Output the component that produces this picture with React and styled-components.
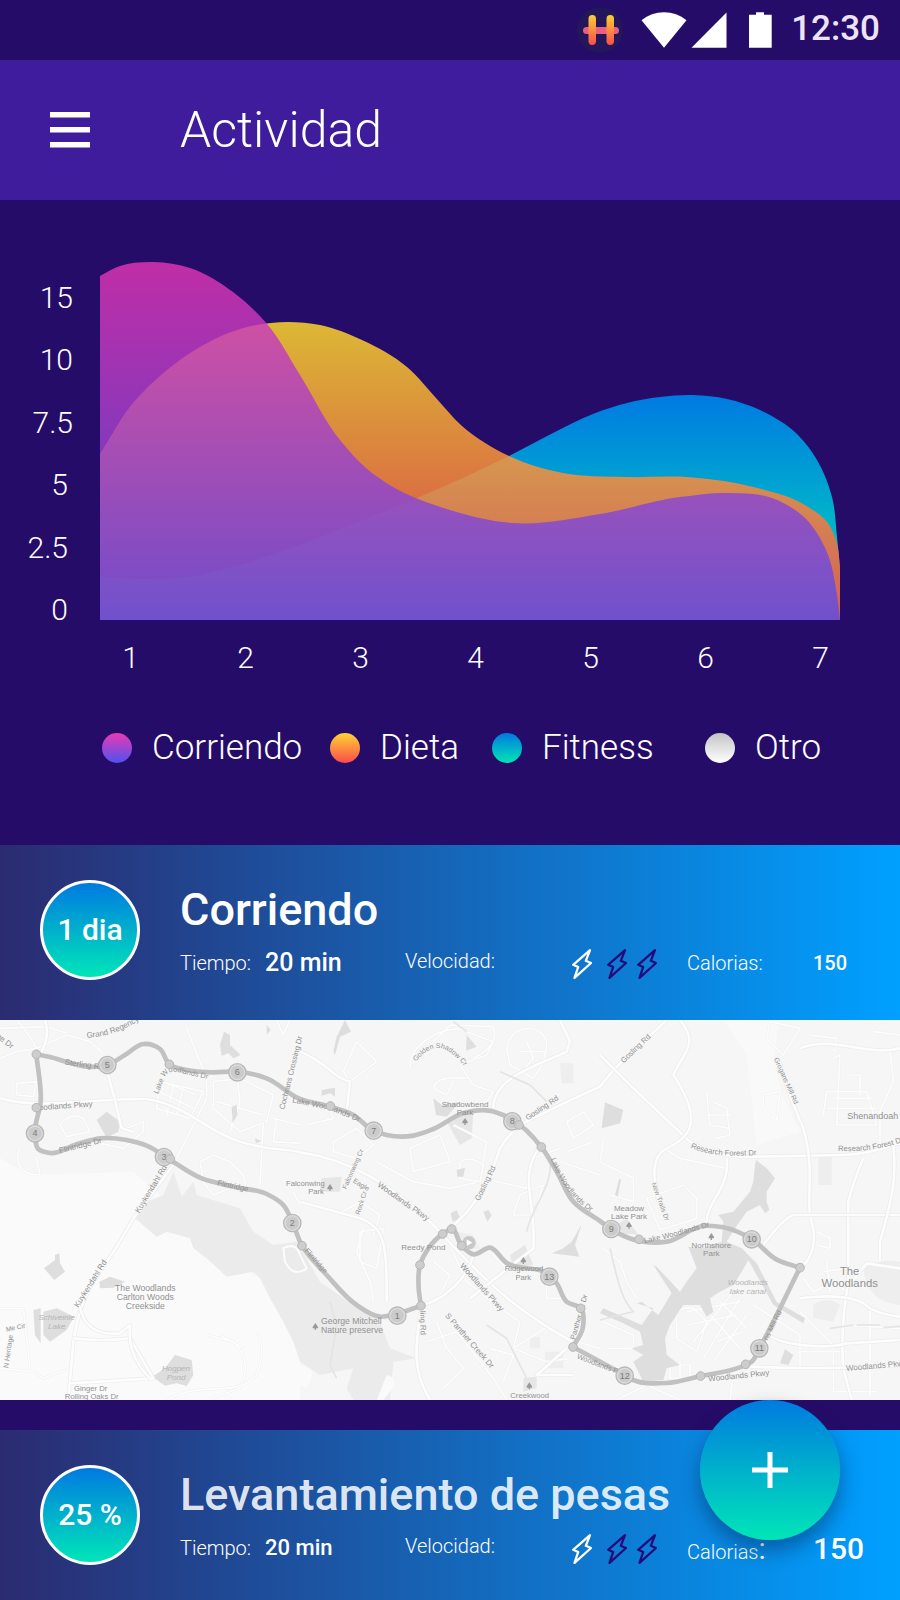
import React from "react";
import styled, { createGlobalStyle } from "styled-components";

const GlobalStyle = createGlobalStyle`
  *, *::before, *::after { box-sizing: border-box; }
  body {
    margin: 0;
    background: #260c69;
    color: #fff;
    font-family: Roboto, "Liberation Sans", sans-serif;
  }
  h1, h2, dl, dt, dd, ul { margin: 0; padding: 0; }
`;

/* ---------- helpers ---------- */

const dist = (a, b) => Math.hypot(b[0] - a[0], b[1] - a[1]) || 1;

/* unit-speed tangent at a point, weighted by the distance to each neighbour */
const tangent = (prev, p, next) => {
  if (!prev || !next) {
    const [a, b] = prev ? [prev, p] : [p, next];
    const d = dist(a, b);
    return [(b[0] - a[0]) / d, (b[1] - a[1]) / d];
  }
  const a = dist(prev, p);
  const b = dist(p, next);
  return [0, 1].map((k) => (((p[k] - prev[k]) / a) * b + ((next[k] - p[k]) / b) * a) / (a + b));
};

const smooth = (pts) => {
  let d = `M${pts[0][0]} ${pts[0][1]}`;
  for (let i = 0; i < pts.length - 1; i++) {
    const p = pts[i];
    const q = pts[i + 1];
    const len = dist(p, q) / 3;
    const t1 = tangent(pts[i - 1], p, q);
    const t2 = tangent(p, q, pts[i + 2]);
    const c1 = [p[0] + t1[0] * len, p[1] + t1[1] * len];
    const c2 = [q[0] - t2[0] * len, q[1] - t2[1] * len];
    d += `C${c1[0].toFixed(1)} ${c1[1].toFixed(1)} ${c2[0].toFixed(1)} ${c2[1].toFixed(1)} ${q[0]} ${q[1]}`;
  }
  return d;
};

/* ---------- layout ---------- */

const Screen = styled.main`
  display: flex;
  flex-direction: column;
`;

const StatusBar = styled.div`
  display: flex;
  align-items: center;
  justify-content: flex-end;
  gap: 18px;
  height: 60px;
  padding-right: 20px;
`;

const SignalGroup = styled.div`
  display: flex;
  gap: 4px;
`;

const Clock = styled.time`
  height: 60px;
  font-size: 35px;
  font-weight: 500;
  line-height: 57px;
  color: #ece4f6;
`;

const Toolbar = styled.header`
  display: flex;
  align-items: center;
  gap: 90px;
  height: 140px;
  padding: 0 50px;
  background: #3f1c9c;
`;

const MenuButton = styled.button`
  display: flex;
  padding: 0;
  border: 0;
  background: none;
  color: inherit;
  cursor: pointer;
`;

const PageTitle = styled.h1`
  font-size: 50px;
  font-weight: 300;
  line-height: 62px;
`;

/* ---------- chart ---------- */

const ChartSection = styled.section`
  padding: 62px 0 76px;
`;

const Plot = styled.div`
  display: grid;
  grid-template-columns: 100px 1fr;
  padding-right: 60px;
`;

const YAxis = styled.ul`
  display: flex;
  flex-direction: column;
  justify-content: space-between;
  height: 363px;
  padding-top: 21px;
`;

const YTick = styled.li`
  list-style: none;
  padding-right: ${(p) => (p.$low ? 32 : 27)}px;
  font-size: 30px;
  font-weight: 300;
  line-height: 30px;
  text-align: right;
`;

const Areas = styled.svg`
  display: block;
  width: 100%;
  height: 358px;
`;

const XAxis = styled.ul`
  display: grid;
  grid-template-columns: repeat(7, 1fr);
  padding: 18px 22px 0 73px;
`;

const XTick = styled.li`
  list-style: none;
  font-size: 30px;
  font-weight: 300;
  line-height: 30px;
  text-align: center;
`;

const Legend = styled.ul`
  display: grid;
  grid-template-columns: 228fr 162fr 213fr 135fr;
  padding: 54px 60px 0 102px;
`;

const LegendItem = styled.li`
  display: flex;
  align-items: center;
  gap: 20px;
  list-style: none;
  font-size: 35px;
  font-weight: 300;
  line-height: 42px;
`;

const Dot = styled.span`
  flex: none;
  width: 30px;
  height: 30px;
  border-radius: 50%;
  background: linear-gradient(${(p) => p.$from}, ${(p) => p.$to});
`;

/* ---------- activity cards ---------- */

const Card = styled.article`
  display: flex;
  gap: 40px;
  min-height: ${(p) => (p.$last ? 170 : 175)}px;
  padding: 35px 0 0 40px;
  background: linear-gradient(to right, #2b2b70, #00a0ff);
`;

const Badge = styled.div`
  display: flex;
  flex: none;
  align-items: center;
  justify-content: center;
  width: 100px;
  height: 100px;
  border: 3px solid #fff;
  border-radius: 50%;
  background: linear-gradient(#007ae0, #00e6b8);
  font-size: 30px;
  font-weight: 500;
  line-height: 30px;
`;

const CardBody = styled.div`
  flex: 1;
  padding-top: 4px;
`;

const CardTitle = styled.h2`
  margin-bottom: 13px;
  font-size: 45px;
  font-weight: 500;
  line-height: 52px;
  color: ${(p) => (p.$muted ? "rgba(255,255,255,.87)" : "#fff")};
`;

const Stats = styled.dl`
  display: grid;
  grid-template-columns: 225fr 282fr 213fr;
  align-items: start;
`;

const Stat = styled.div`
  display: flex;
  align-items: ${(p) => p.$align || "center"};
`;

const StatName = styled.dt`
  flex: none;
  width: ${(p) => p.$width}px;
  font-size: 20px;
  font-weight: 300;
  line-height: ${(p) => p.$line || 28}px;
`;

const StatValue = styled.dd`
  display: flex;
  font-size: ${(p) => p.$size}px;
  font-weight: 500;
  line-height: ${(p) => (p.$size === 30 ? 30 : 28)}px;
`;

const BigColon = styled.span`
  font-size: 30px;
  font-weight: 400;
  line-height: 28px;
`;

const Bolts = styled.span`
  display: flex;
  gap: 10px;

  svg:first-child { margin-right: 5px; }
`;

const MapFrame = styled.svg`
  display: block;
  width: 100%;
  height: 380px;
  margin-bottom: 30px;
  background: #f6f6f6;
`;

const AddButton = styled.button`
  position: fixed;
  right: 60px;
  bottom: 60px;
  display: flex;
  align-items: center;
  justify-content: center;
  width: 140px;
  height: 140px;
  padding: 0;
  border: 0;
  border-radius: 50%;
  background: linear-gradient(#007ae0, #00e6b8);
  box-shadow: 0 10px 20px rgba(0, 20, 60, .4);
  cursor: pointer;
`;

/* ---------- icons ---------- */

const LogoIcon = () => (
  <svg width="46" height="48" viewBox="0 0 46 48" aria-hidden="true">
    <defs>
      <linearGradient id="bar" x1="0" y1="0" x2="0" y2="1">
        <stop offset="0" stopColor="#fdcf35" />
        <stop offset="1" stopColor="#fd4c4c" />
      </linearGradient>
    </defs>
    <circle cx="23" cy="24" r="23" fill="#23165b" />
    <rect x="6" y="21" width="36" height="7" rx="3.5" fill="#e9607f" />
    <rect x="11.500" y="9" width="7.500" height="30" rx="3.700" fill="url(#bar)" />
    <rect x="29.500" y="9" width="7.500" height="30" rx="3.700" fill="url(#bar)" />
  </svg>
);

const WifiIcon = () => (
  <svg width="46" height="36" viewBox="0 0 46 36" aria-hidden="true">
    <path d="M.5 8.300C7 3 14.500.3 23 .3S39 3 45.500 8.300L23 35.700Z" fill="#fff" />
  </svg>
);

const CellIcon = () => (
  <svg width="36" height="36" viewBox="0 0 36 36" aria-hidden="true">
    <path d="M.500 35.700H35.500V.500Z" fill="#fff" />
  </svg>
);

const BatteryIcon = () => (
  <svg width="28" height="36" viewBox="0 0 28 36" aria-hidden="true">
    <path d="M4 2.700h7V.300h8v2.400h7.700v33H4Z" fill="#fff" />
  </svg>
);

const MenuIcon = () => (
  <svg width="40" height="36" viewBox="0 0 40 36" aria-hidden="true">
    <path d="M0 0h40v5.500H0zM0 15h40v5.500H0zM0 30h40v5.500H0z" fill="#fff" />
  </svg>
);

const PlusIcon = () => (
  <svg width="36" height="36" viewBox="0 0 36 36" aria-hidden="true">
    <path d="M15.500 0h5v15.500H36v5H20.500V36h-5V20.500H0v-5h15.500z" fill="#fff" />
  </svg>
);

const Bolt = ({ color }) => (
  <svg width="20" height="30" viewBox="0 0 20 30" aria-hidden="true">
    <path
      d="M18 1.200 1.200 15.800 6.200 18 2.500 28.800 19 14 13.800 11.800Z"
      fill="none"
      stroke={color}
      strokeWidth="2.300"
      strokeLinejoin="round"
    />
  </svg>
);

/* ---------- chart data ---------- */

const FITNESS = [
  [0, 315], [43, 317], [87, 315], [133, 305], [183, 289], [233, 270], [317, 236],
  [409, 194], [453, 171], [493, 152], [527, 141], [560, 135], [593, 133],
  [627, 137], [660, 148], [697, 172], [717, 198], [732, 235], [737, 275],
  [740, 310], [740, 358],
];
const DIET = [
  [0, 192], [33, 141], [67, 108], [100, 85], [140, 67], [188, 60], [220, 63],
  [262, 78], [307, 105], [336, 136], [362, 164], [409, 194], [463, 211],
  [525, 215], [587, 215], [653, 225], [705, 243], [727, 260], [736, 278],
  [740, 305], [740, 358],
];
const RUNNING = [
  [0, 14], [20, 4], [50, 0], [90, 6], [133, 30], [167, 62], [200, 113],
  [240, 178], [266, 206], [293, 225], [350, 248], [412, 261], [500, 252],
  [580, 235], [630, 231], [672, 236], [706, 257], [726, 288], [737, 333],
  [740, 358],
];
const area = (pts) => `${smooth(pts)}L740 358L0 358Z`;

const SERIES = [
  { name: "Corriendo", from: "#ea3ab4", to: "#4f51f0" },
  { name: "Dieta", from: "#fdd435", to: "#ff4a4a" },
  { name: "Fitness", from: "#0078e2", to: "#00e6b4" },
  { name: "Otro", from: "#c4c4c4", to: "#ffffff" },
];

/* ---------- map ---------- */

const ROUTES = [
  [[109, 118], [150, 126], [205, 142], [260, 155], [322, 150], [375, 120], [430, 87], [480, 102], [508, 148], [560, 165], [640, 172], [712, 170], [800, 190], [900, 252], [991, 275], [1060, 300], [1120, 347], [1160, 360], [1240, 362], [1300, 342], [1390, 295], [1460, 286], [1537, 314], [1624, 396], [1670, 470], [1720, 560], [1800, 618], [1850, 652], [1917, 678], [2000, 680], [2110, 633], [2170, 637], [2255, 672], [2330, 734], [2400, 758]],
  [[2400, 758], [2278, 1000], [2255, 1040], [2237, 1050], [2102, 1083], [2000, 1104], [1900, 1095], [1873, 1080], [1719, 996]],
  [[1719, 996], [1748, 940], [1742, 880], [1700, 860], [1670, 805], [1648, 780], [1520, 744], [1470, 698], [1420, 718], [1385, 692], [1355, 642], [1328, 657], [1285, 700], [1260, 750], [1256, 820], [1263, 872]],
  [[1263, 872], [1192, 896], [1140, 905], [1070, 870], [980, 780], [906, 692], [877, 622], [850, 570], [800, 537], [700, 515], [600, 488], [511, 435], [440, 392], [380, 375], [300, 370], [230, 388], [150, 414], [115, 402], [105, 355], [122, 260], [109, 118]],
];

const STOPS = [
  [1192, 902, "1"], [877, 624, "2"], [492, 426, "3"], [105, 355, "4"], [322, 150, "5"],
  [712, 172, "6"], [1121, 347, "7"], [1537, 319, "8"], [1834, 642, "9"], [2255, 673, "10"],
  [2278, 1000, "11"], [1874, 1082, "12"], [1648, 785, "13"],
];

const NODES = [
  [109, 118], [109, 278], [508, 148], [511, 432], [991, 273], [1557, 330], [1624, 396],
  [1917, 673], [2400, 758], [2237, 1048], [2102, 1083], [1719, 996], [1742, 880],
  [1385, 692], [1355, 642], [1328, 657], [1260, 750], [1263, 872], [906, 692],
];

/* x, y, text, rotation, size, lighter italic water name */
const LABELS = [
  [10, 84, "ge Dr", 38, 24], [248, 156, "Sterling Ri", 8, 24],
  [198, 280, "oodlands Pkwy", -4, 24], [243, 399, "Flintridge Dr", -14, 24],
  [880, 175, "Cochrans Crossing Dr", -76, 23],
  [460, 526, "Kuykendahl Rd", -59, 24], [697, 520, "Flintridge", 12, 23],
  [278, 810, "Kuykendahl Rd", -58, 24], [436, 827, "The Woodlands", 0, 26],
  [436, 854, "Carlton Woods", 0, 26], [436, 882, "Creekside", 0, 26],
  [170, 916, "Schiveinle", 0, 24, 1], [170, 943, "Lake", 0, 24, 1],
  [32, 1010, "N Heritage", -82, 21], [48, 944, "Me Cir", -12, 20],
  [528, 1068, "Hogpen", 0, 24, 1], [528, 1094, "Pond", 0, 24, 1],
  [272, 1128, "Ginger Dr", 0, 23], [275, 1153, "Rolling Oaks Dr", 0, 23],
  [916, 513, "Falconwing", 0, 23], [948, 538, "Park", 0, 23],
  [1395, 276, "Shadowbend", 0, 24], [1395, 300, "Park", 0, 24],
  [1630, 285, "Gosling Rd", -34, 23], [1463, 508, "Gosling Rd", -64, 23],
  [1065, 465, "Falconwing Cr", -66, 20], [1080, 515, "Eagle", 32, 21], [1090, 566, "Rock Cr", -72, 20],
  [1206, 566, "Woodlands Pkwy", 35, 24], [1270, 706, "Reedy Pond", 0, 24],
  [1440, 822, "Woodlands Pkwy", 48, 24], [1403, 982, "S Panther Creek Dr", 49, 24],
  [1261, 924, "ling Rd", 88, 23], [1054, 926, "George Mitchell", 0, 26], [1056, 955, "Nature preserve", 0, 26],
  [943, 742, "Flintridge", 48, 22], [1572, 768, "Ridgewood", 0, 23], [1570, 794, "Park", 0, 23],
  [1589, 1148, "Creekwood", 0, 23], [1744, 908, "Panther Ck Dr", -74, 22],
  [1808, 1060, "Woodlands Pkwy", 21, 22],
  [1912, 106, "Gosling Rd", -44, 23], [2352, 200, "Grogans Mill Rd", 66, 21],
  [2618, 311, "Shenandoah", 0, 27], [1975, 562, "New Trails Dr", 70, 20],
  [1887, 587, "Meadow", 0, 24], [1887, 612, "Lake Park", 0, 24],
  [2134, 698, "Northshore", 0, 24], [2134, 723, "Park", 0, 24],
  [2243, 811, "Woodlands", 0, 24, 1], [2243, 836, "lake canal", 0, 24, 1],
  [2549, 780, "The", 0, 34], [2549, 816, "Woodlands", 0, 34],
  [2324, 934, "ns Mill Rd", -64, 22], [2217, 1090, "Woodlands Pkwy", -6, 24],
  [2630, 1060, "Woodlands Pkwy", -5, 24],
];

const CURVED = [
  ["regency", "M260 68Q340 66 420 15", "Grand Regency", 24],
  ["golden", "M1248 140Q1300 76 1350 112T1400 180", "Golden Shadow Cr", 21],
  ["lakewest", "M474 238L496 182Q512 162 550 176L650 198", "Lake Woodlands Dr", 22],
  ["lakemid", "M876 262L990 285L1100 330", "Lake Woodlands Dr", 24],
  ["lakeeast", "M1652 432Q1700 560 1810 612", "Lake Woodlands Dr", 23],
  ["lakepark", "M1934 684Q2020 668 2150 628", "Lake Woodlands Dr", 23],
  ["forest", "M2072 398Q2150 432 2290 418", "Research Forest Dr", 23],
  ["forest2", "M2514 408Q2630 412 2720 376", "Research Forest Dr", 23],
];

const TREES = [[990, 518], [1395, 320], [946, 935], [1570, 737], [1588, 1113], [1887, 631], [2134, 665]];

const WIDE_ROADS = [
  "M0 250Q60 268 150 265C260 262 360 250 440 252C560 270 620 350 720 380S860 400 900 412C1040 430 1180 510 1300 630C1420 760 1520 870 1700 970L1730 990",
  "M400 610Q350 700 300 770Q240 850 220 980L205 1155",
  "M520 450L400 610", "M135 15Q150 60 125 110", "M320 165Q345 250 365 340L400 350",
  "M1350 640Q1450 560 1500 400Q1540 330 1620 300Q1720 250 1800 215L1840 165L2000 15",
  "M1265 870C1320 860 1400 800 1420 720", "M1265 870C1250 970 1230 1060 1290 1155",
  "M1800 120L1900 220L2070 380Q2150 430 2270 425L2520 420C2600 420 2640 400 2700 385",
  "M2340 140Q2350 200 2410 340C2450 480 2410 560 2440 640Q2450 720 2400 760",
  "M2590 430Q2560 500 2545 560L2545 800Q2520 940 2530 1060L2555 1155",
  "M2400 850Q2560 830 2610 880Q2650 900 2700 905", "M2290 690Q2350 610 2380 600H2700",
  "M2290 950C2350 1000 2500 1000 2540 985L2700 975", "M2250 1055Q2500 1065 2700 1050",
  "M2680 390C2690 480 2680 540 2640 680L2640 740", "M2400 100C2500 60 2600 125 2700 100",
  "M1680 15L1710 80L1700 110C1600 155 1480 190 1480 280",
  "M900 110C980 140 1000 190 1050 200L1040 290", "M2180 430C2190 520 2120 560 2120 620",
  "M2040 15C2100 90 2050 110 2020 180C2120 330 2060 370 2000 400S1970 520 1975 560",
  "M1700 1000L1610 1080H1720", "M1624 390C1550 480 1610 560 1600 700L1410 850",
  "M900 560L1080 610C1160 640 1160 700 1160 860", "M220 970Q300 980 390 970L460 1090L210 1105",
  "M240 875C250 940 300 960 360 955L390 930Q380 1020 450 1090", "M2700 760L2600 745L2540 820",
];

const THIN_ROADS = [
  "M0 130L50 110L110 100L200 60L270 80L310 115M0 40L140 35L200 55M50 15Q90 60 110 100",
  "M60 400C40 440 60 480 120 480L110 430M50 205L110 200L100 245L50 240Z",
  "M180 330Q210 290 250 310L270 350L200 365ZM380 340L430 320L430 350L370 400L300 385",
  "M480 200L610 230L570 310L470 280ZM500 205L590 240M480 230L580 280M470 255L560 300M520 210L500 300M550 220L530 300",
  "M640 200L720 190L820 240L800 320L720 350L640 280ZM650 260L790 300M710 180L720 260L690 350",
  "M820 310L900 330M830 310L820 380L900 385M790 320L780 510M600 440L640 420L690 440L730 480L740 530L690 520L640 540L610 500Z",
  "M530 430L620 250L620 170M560 40L620 190M830 15L850 60L870 15M0 880L70 880L90 1060",
  "M0 1060L100 1070L130 1090L210 1060M620 960L700 980Q760 1040 720 1120L620 1155M660 960L730 1000",
  "M500 1155C620 1090 700 1155 770 1080Q800 1000 770 950",
  "M880 530L900 570M850 700Q890 680 900 720L920 760Q880 790 855 740Z",
  "M1070 80L1130 140L1050 200L1030 170ZM920 330L1000 310L980 260M1000 380L1070 340L1120 390L1070 430L1000 410Z",
  "M1230 400L1320 360L1350 440L1240 470ZM1130 440L1240 500L1350 520L1440 500L1460 380L1360 330",
  "M1230 160C1220 80 1360 20 1400 50L1480 80L1460 120L1380 150L1420 210L1480 230L1460 260M1400 190Q1310 180 1300 220L1340 240L1360 200M1300 80L1350 30L1480 35Q1500 90 1420 130",
  "M1520 100C1530 30 1620 20 1640 80Q1640 140 1600 190L1530 150ZM1580 80L1600 130L1560 180M1560 110H1640",
  "M1380 440Q1410 420 1450 450L1440 500L1380 490ZM1450 490L1580 520L1600 430L1680 400M1560 540L1630 510L1600 600L1540 600Z",
  "M1080 650L1150 640L1130 760L1080 740ZM1010 600L1080 560L1140 600L1120 660M1090 640L1070 710L1110 800L1120 860",
  "M1300 740L1350 780L1310 860M1350 690L1400 800L1500 880L1560 920L1540 1000L1650 930M1310 920L1340 1000L1390 1060L1330 1120M1280 980L1370 950L1480 1090L1520 1155",
  "M1470 1000L1540 1020L1510 1100M1540 1000L1640 1040L1710 1030M1640 780V850L1700 850M1480 720L1530 770",
  "M1730 980L1800 1000M1700 320L1750 290L1780 330L1720 370ZM1700 410L1780 380M1680 440L1800 480",
  "M2120 230L2130 330L2190 340M2140 260L2180 280L2190 360L2150 370M2120 300H2190M2290 240L2340 230L2330 320L2290 280ZM2310 20L2400 40L2350 120L2300 70Z",
  "M2430 60L2510 70L2505 110M2500 130L2520 120L2510 330H2630L2600 230H2480L2470 300M2500 250H2620M2480 280H2630M2550 180H2580V240M2620 50L2700 60M2670 110L2680 200L2640 290V400",
  "M1810 380L1800 440L1900 490V560L1830 540M2050 510L2090 550V610L1980 645L1940 550ZM1810 700L1860 740L1880 800L1910 850M1990 400L2040 430L2180 460",
  "M2030 930Q2020 870 2080 880L2120 920L2090 1010L2030 970ZM2060 890L2220 860M2060 930L2210 900M2080 980L2200 830M2110 1030L2220 850M2140 1040L2240 900M2150 980L2230 950M2160 860L2240 940M2140 910L2220 1000",
  "M2010 1050H2070V1090H2010ZM2040 1040V1090M2200 1080L2190 1155M2260 870L2400 960V1050M2400 890L2500 990V1130H2630M2610 880V1140M2530 930L2700 940",
  "M2450 650L2490 670V700L2450 690M2410 790L2440 830L2500 800L2540 830M2470 770L2540 760M2480 740L2490 830M1810 920L1900 960V1000L1820 1000M1850 1155L1940 1110L2040 1155M2400 1010H2540",
];

const LAKES = [
  "M2268 435L2300 460L2325 490L2300 530V560L2308 585L2295 595L2280 570L2240 590L2205 640L2180 680L2225 700L2270 745L2330 860L2415 910L2410 925L2320 870L2245 735L2225 770L2200 810L2160 830L2130 850L2140 890L2120 905L2100 870L2050 870L2010 930L1995 970L2000 1020L2040 1050L2000 1060L1990 1095L1930 1100L1900 1040L1930 1020L1895 1000L1930 990L1920 950L1870 925L1800 895L1810 880L1925 930L1960 880L1910 865L1925 860L1975 900L2015 835L1960 750L1970 755L2040 830L2060 800L2090 760L2065 695L2110 700L2165 680L2170 620L2155 600L2200 590L2225 560L2250 530L2260 500L2265 450Z",
  "M660 90L672 50L690 60V90L722 120L700 130L685 115L665 122Z",
  "M290 315L320 290L360 320L355 350L320 368Z",
  "M132 760L165 735L165 720L178 715L180 745L195 770L163 795Z",
  "M100 885L122 880V985L105 960ZM130 890L170 880L222 905L200 945L150 980L130 960Z",
  "M457 1085L495 1060L525 1020L575 1035L580 1080L560 1113L530 1105L495 1112Z",
  "M1035 15L1053 50L1020 65L1005 120L1000 110L1010 65Z",
  "M1400 60L1430 95L1398 107Z", "M1300 250L1325 270L1380 260L1340 305L1308 300Z",
  "M1745 628L1725 690L1738 725L1655 715L1690 700L1715 680Z", "M1352 595L1370 585L1380 610L1358 620Z",
  "M965 225L1005 218V245L990 235L965 242Z", "M298 800L330 785L375 800L340 818L300 820Z",
  "M1450 590L1465 585L1475 600L1462 620Z", "M2340 1045L2355 1003L2380 1020L2365 1050Z",
  "M695 275L710 270L712 300L698 325Z", "M1370 465L1395 458L1390 485L1372 485Z",
  "M1815 262L1870 285L1860 325L1805 340Z", "M1845 540L1858 490L1863 495L1853 545Z",
  "M765 370L785 378L768 385Z", "M800 30L812 45L800 60Z",
];

const RouteMap = () => (
  <MapFrame viewBox="0 15 2700 1140" preserveAspectRatio="xMidYMid slice" role="img" aria-label="Mapa del recorrido" fontFamily="'Liberation Sans', sans-serif">
    <path d="M0 430L90 480L400 470L500 560L600 700L800 800L900 950V1155H0Z" fill="#fafafa" />
    <path d="M2170 15H2340L2320 130L2350 250L2400 350L2270 390L2240 120Z" fill="#f9f9f9" />
    <path d="M520 470L545 545L580 500L590 540L720 580L760 650L820 690L890 680L960 800L1060 870L1140 920L1170 1000L1250 1030L1180 1040L1170 1155H1060L1040 1120L1060 1060L960 1080L900 1040L880 980L850 920L810 850L780 790L760 770L680 785L620 730L580 700L570 670L500 650L470 665L405 610L440 560L490 540Z" fill="#ebebeb" />
    <path d="M1160 1080Q1210 1090 1150 1155H1130ZM900 1050Q960 1060 920 1120L900 1110Z" fill="#fafafa" />
    <path d="M1340 320L1420 290L1415 370L1380 390ZM1530 720L1575 690L1600 750L1540 760ZM1850 630L1880 610L1915 660L1870 655ZM1570 1090L1610 1085V1120L1570 1130ZM965 490L1025 485L1020 530H960Z" fill="#e6e6e6" />
    <path d="M2590 760Q2640 730 2700 740V870Q2600 860 2590 760ZM2440 870Q2480 840 2520 870L2500 920L2440 910ZM2455 415H2495V510H2455ZM1680 145H1720V205H1685ZM1635 1010H1690V1060H1635ZM1590 965H1620V1000H1590ZM1370 650L1420 660L1440 700L1380 710Z" fill="#eeeeee" />
    {THIN_ROADS.map((d) => (
      <g key={d} fill="none" strokeLinejoin="round">
        <path d={d} stroke="#efefef" strokeWidth="8" />
        <path d={d} stroke="#fdfdfd" strokeWidth="5" />
      </g>
    ))}
    <path d={LAKES.join("")} fill="#dedede" />
    {WIDE_ROADS.map((d) => (
      <g key={d} fill="none" strokeLinejoin="round">
        <path d={d} stroke="#ebebeb" strokeWidth="12" />
        <path d={d} stroke="#fdfdfd" strokeWidth="8" />
      </g>
    ))}
    <path d="M1360 20L1400 50M1500 170L1590 210L1640 260M1650 430C1660 520 1600 560 1580 650M990 860L1010 930L990 1050L1010 1090M1460 930L1520 970L1580 1090M2490 940L2560 930M2570 930H2640M2650 938L2700 934M1830 700C1850 780 1860 850 1900 890L1800 915" fill="none" stroke="#e4e4e4" strokeWidth="5" />
    {ROUTES.map((pts, i) => (
      <path key={i} d={smooth(pts)} fill="none" stroke="#c1c1c1" strokeWidth="14" strokeLinecap="round" />
    ))}
    <g textAnchor="middle" fill="#919191">
      {LABELS.map(([x, y, text, turn, size, water], i) => (
        <text
          key={i}
          transform={turn ? `rotate(${turn} ${x} ${y})` : undefined}
          x={x}
          y={y}
          fontSize={size}
          fill={water ? "#b4b4b4" : undefined}
          fontStyle={water ? "italic" : undefined}
        >
          {text}
        </text>
      ))}
    </g>
    {CURVED.map(([id, d, text, size]) => (
      <g key={id}>
        <path id={id} d={d} fill="none" />
        <text fontSize={size} fill="#919191"><textPath href={`#${id}`}>{text}</textPath></text>
      </g>
    ))}
    {TREES.map(([x, y]) => (
      <path key={x} d={`M${x} ${y - 11}l8 12v4h-6v5h-4v-5h-6v-4Z`} fill="#999" />
    ))}
    {STOPS.map(([x, y, n]) => (
      <g key={n}>
        <circle cx={x} cy={y} r="26" fill="#dcdcdc" stroke="#b8b8b8" strokeWidth="4" />
        <circle cx={x} cy={y} r="20" fill="#cbcbcb" />
        <text x={x} y={y + 9} fontSize="27" textAnchor="middle" fill="#7c7c7c">{n}</text>
      </g>
    ))}
    <circle cx="1407" cy="683" r="20" fill="#c8c8c8" />
    <path d="M1400 673L1417 683L1400 693Z" fill="#fff" />
    {NODES.map(([x, y]) => (
      <circle key={`${x}-${y}`} cx={x} cy={y} r="13" fill="#cdcdcd" stroke="#b6b6b6" strokeWidth="3" />
    ))}
  </MapFrame>
);

/* ---------- page ---------- */

const Activity = ({ badge, title, muted, last, timeSize, calSize }) => (
  <Card $last={last}>
    <Badge>{badge}</Badge>
    <CardBody>
      <CardTitle $muted={muted}>{title}</CardTitle>
      <Stats>
        <Stat>
          <StatName $width={85}>Tiempo:</StatName>
          <StatValue $size={timeSize}>20 min</StatValue>
        </Stat>
        <Stat $align="flex-start">
          <StatName $width={167} $line={24}>Velocidad:</StatName>
          <StatValue $size={20}>
            <Bolts role="img" aria-label="1 de 3">
              <Bolt color="#fff" />
              <Bolt color="#240b7c" />
              <Bolt color="#240b7c" />
            </Bolts>
          </StatValue>
        </Stat>
        <Stat $align="baseline">
          <StatName $width={126}>Calorias{last ? <BigColon>:</BigColon> : ":"}</StatName>
          <StatValue $size={calSize}>150</StatValue>
        </Stat>
      </Stats>
    </CardBody>
  </Card>
);

export default function App() {
  return (
    <>
      <GlobalStyle />
      <Screen>
        <StatusBar>
          <LogoIcon />
          <SignalGroup>
            <WifiIcon />
            <CellIcon />
          </SignalGroup>
          <BatteryIcon />
          <Clock>12:30</Clock>
        </StatusBar>

        <Toolbar>
          <MenuButton type="button" aria-label="Menú"><MenuIcon /></MenuButton>
          <PageTitle>Actividad</PageTitle>
        </Toolbar>

        <ChartSection>
          <Plot>
            <YAxis>
              {["15", "10", "7.5", "5", "2.5", "0"].map((v, i) => (
                <YTick key={v} $low={i > 2}>{v}</YTick>
              ))}
            </YAxis>
            <Areas viewBox="0 0 740 358" preserveAspectRatio="none" role="img" aria-label="Actividad por día">
              <defs>
                <linearGradient id="fitness" x1="0" y1="0" x2="0" y2="1">
                  <stop offset="0" stopColor="#007ae2" />
                  <stop offset="1" stopColor="#00e0b8" />
                </linearGradient>
                <linearGradient id="diet" x1="0" y1="0" x2="0" y2="1">
                  <stop offset="0" stopColor="#fcd62b" />
                  <stop offset="1" stopColor="#fa4846" />
                </linearGradient>
                <linearGradient id="running" x1="0" y1="0" x2="0" y2="1">
                  <stop offset="0" stopColor="#e235b4" />
                  <stop offset="1" stopColor="#5a4ee6" />
                </linearGradient>
              </defs>
              <path d={area(FITNESS)} fill="url(#fitness)" />
              <path d={area(DIET)} fill="url(#diet)" fillOpacity=".85" />
              <path d={area(RUNNING)} fill="url(#running)" fillOpacity=".82" />
            </Areas>
          </Plot>
          <XAxis>
            {[1, 2, 3, 4, 5, 6, 7].map((d) => <XTick key={d}>{d}</XTick>)}
          </XAxis>
          <Legend>
            {SERIES.map((s) => (
              <LegendItem key={s.name}>
                <Dot $from={s.from} $to={s.to} />
                {s.name}
              </LegendItem>
            ))}
          </Legend>
        </ChartSection>

        <Activity badge="1 dia" title="Corriendo" timeSize={25} calSize={20} />
        <RouteMap />
        <Activity badge="25 %" title="Levantamiento de pesas" muted last timeSize={22} calSize={30} />
      </Screen>
      <AddButton type="button" aria-label="Añadir actividad"><PlusIcon /></AddButton>
    </>
  );
}
